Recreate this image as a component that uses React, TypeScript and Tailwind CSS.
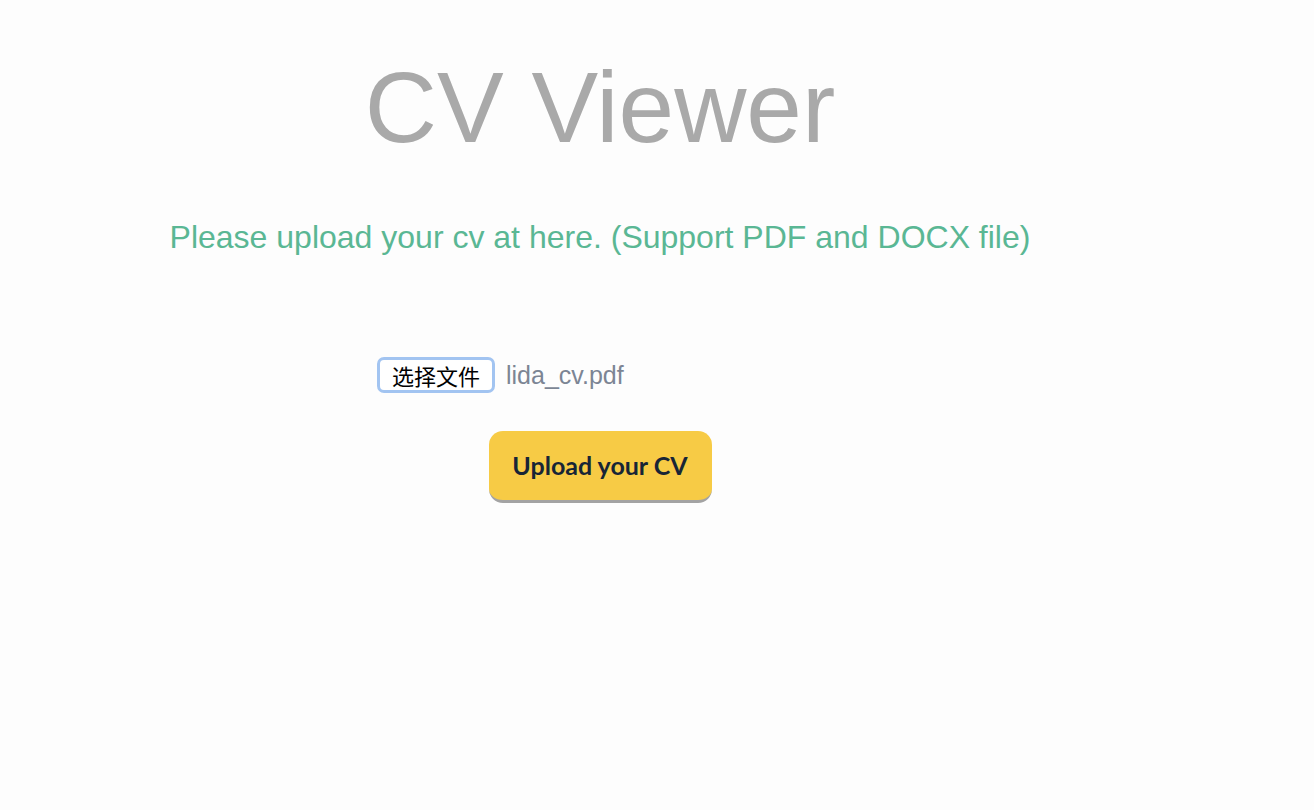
export default function App() {
  return (
    <div className="min-h-screen w-full bg-[#fdfdfd] font-['Liberation_Sans',Arial,sans-serif]">
      <div className="w-[1200px] flex flex-col items-center pt-[57px]">
        <h1 className="text-[100px] leading-none text-[#a9a9a9] font-normal">CV Viewer</h1>

        <p className="mt-[64px] text-[32px] leading-none text-[#5ab794]">
          Please upload your cv at here. (Support PDF and DOCX file)
        </p>

        <div className="mt-[104px] w-[446px] flex items-center gap-[11px]">
          <button className="h-[36px] w-[118px] rounded-[7px] border-[3px] border-[#a2c4f1] bg-white text-[22px] leading-none text-black font-['Noto_Sans_CJK_SC',sans-serif]">
            选择文件
          </button>
          <span className="text-[25px] leading-none text-[#7c8594]">lida_cv.pdf</span>
        </div>

        <button className="mt-[38px] h-[72px] w-[223px] rounded-[14px] bg-[#f7cb45] border-b-[3px] border-[#a3a3a3] text-[25px] font-bold text-[#172536] font-['Lato',sans-serif]">
          Upload your CV
        </button>
      </div>
    </div>
  );
}
